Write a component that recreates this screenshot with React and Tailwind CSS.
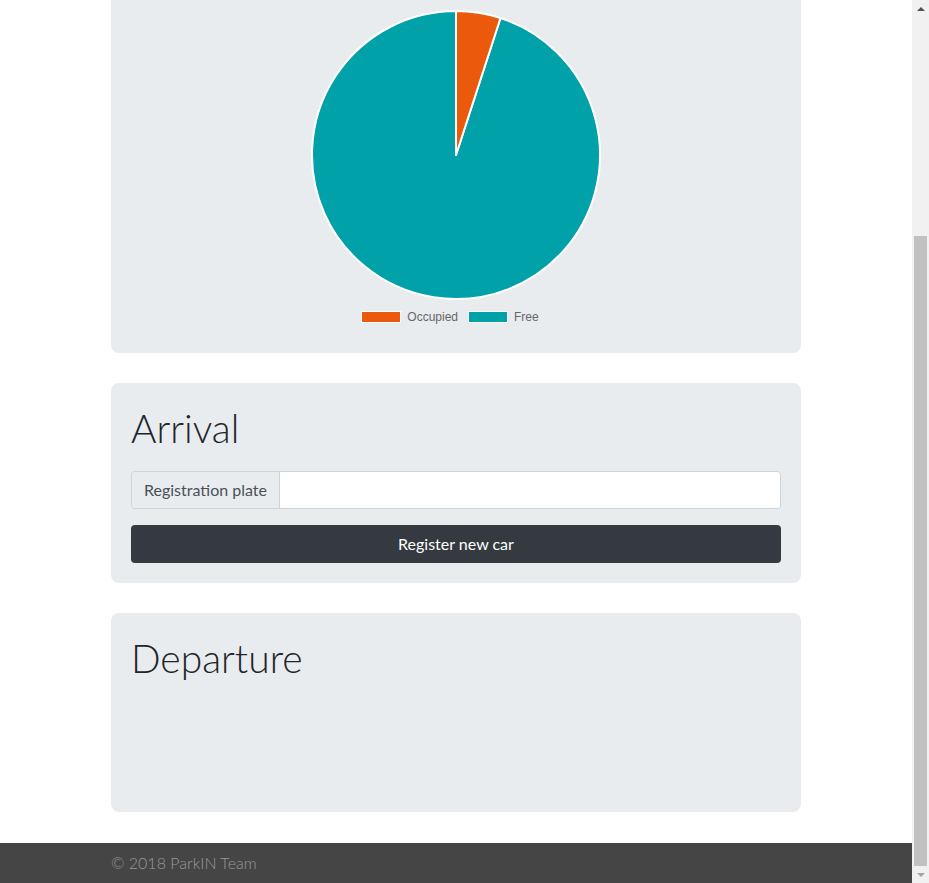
import React from 'react';

const font = { fontFamily: 'Lato, "Open Sans", sans-serif' };

// Pie geometry: 5% occupied, starting at 12 o'clock
function PieChart({ occupied = 5, total = 100 }) {
  const r = 144;
  const c = 146;
  const a = (occupied / total) * Math.PI * 2;
  const x = c + r * Math.sin(a);
  const y = c - r * Math.cos(a);
  const large = a > Math.PI ? 1 : 0;
  const occ = `M${c},${c} L${c},${c - r} A${r},${r} 0 ${large} 1 ${x},${y} Z`;
  const free = `M${c},${c} L${x},${y} A${r},${r} 0 ${1 - large} 1 ${c},${c - r} Z`;
  return (
    <svg width="292" height="292" viewBox="0 0 292 292">
      <path d={free} fill="#00a1a8" stroke="#fff" strokeWidth="2" strokeLinejoin="round" />
      <path d={occ} fill="#ea590c" stroke="#fff" strokeWidth="2" strokeLinejoin="round" />
    </svg>
  );
}

function Legend() {
  return (
    <div className="flex items-center justify-center gap-[10px] text-[12px] text-[#666]" style={{ fontFamily: '"Liberation Sans", Arial, sans-serif' }}>
      <div className="flex items-center gap-[6px]">
        <span className="w-[40px] h-[12px] bg-[#ea590c] border border-white" />
        <span>Occupied</span>
      </div>
      <div className="flex items-center gap-[6px]">
        <span className="w-[40px] h-[12px] bg-[#00a1a8] border border-white" />
        <span>Free</span>
      </div>
    </div>
  );
}

function Scrollbar() {
  return (
    <div className="w-[17px] h-full bg-[#f1f1f1] flex flex-col items-center flex-shrink-0">
      <div className="h-[17px] w-full flex items-center justify-center">
        <span className="w-0 h-0 border-l-[4px] border-r-[4px] border-b-[4px] border-l-transparent border-r-transparent border-b-[#505050]" />
      </div>
      <div className="h-[219px]" />
      <div className="w-[13px] h-[630px] bg-[#c1c1c1]" />
      <div className="flex-1 w-full flex items-center justify-center">
        <span className="w-0 h-0 border-l-[4px] border-r-[4px] border-t-[4px] border-l-transparent border-r-transparent border-t-[#a3a3a3]" />
      </div>
    </div>
  );
}

export default function App() {
  return (
    <div className="flex w-[929px] h-[883px] overflow-hidden bg-white" style={font}>
      <div className="flex-1 flex flex-col">
        <main className="flex-1 w-[690px] mx-auto flex flex-col gap-[30px]">
          {/* ── Chart card (scrolled, top cut off) ── */}
          <section className="bg-[#e9ecef] rounded-b-[8px] pt-[9px] pb-[27px] flex flex-col items-center">
            <PieChart occupied={5} total={100} />
            <div className="mt-[7px] pr-[12px]">
              <Legend />
            </div>
          </section>

          {/* ── Arrival ── */}
          <section className="bg-[#e9ecef] rounded-[8px] px-[20px] pt-[21px] pb-[20px]">
            <h1 className="text-[39px] leading-[48px] font-light text-[#212529] mb-[19px]">Arrival</h1>
            <div className="flex h-[38px] rounded-[4px] border border-[#ced4da] overflow-hidden">
              <span className="px-[12px] flex items-center bg-[#e9ecef] text-[#495057] text-[16px] border-r border-[#ced4da]">
                Registration plate
              </span>
              <input className="flex-1 bg-white outline-none px-[12px]" />
            </div>
            <button className="mt-[16px] w-full h-[38px] rounded-[4px] bg-[#343a40] text-white text-[16px]">
              Register new car
            </button>
          </section>

          {/* ── Departure ── */}
          <section className="bg-[#e9ecef] rounded-[8px] px-[20px] pt-[21px] h-[199px] flex-shrink-0">
            <h1 className="text-[39px] leading-[48px] font-light text-[#212529]">Departure</h1>
          </section>
        </main>

        <footer className="h-[40px] bg-[#454545] flex-shrink-0">
          <div className="w-[690px] mx-auto h-full flex items-center text-[16px] text-[#999] font-light">
            © 2018 ParkIN Team
          </div>
        </footer>
      </div>
      <Scrollbar />
    </div>
  );
}
